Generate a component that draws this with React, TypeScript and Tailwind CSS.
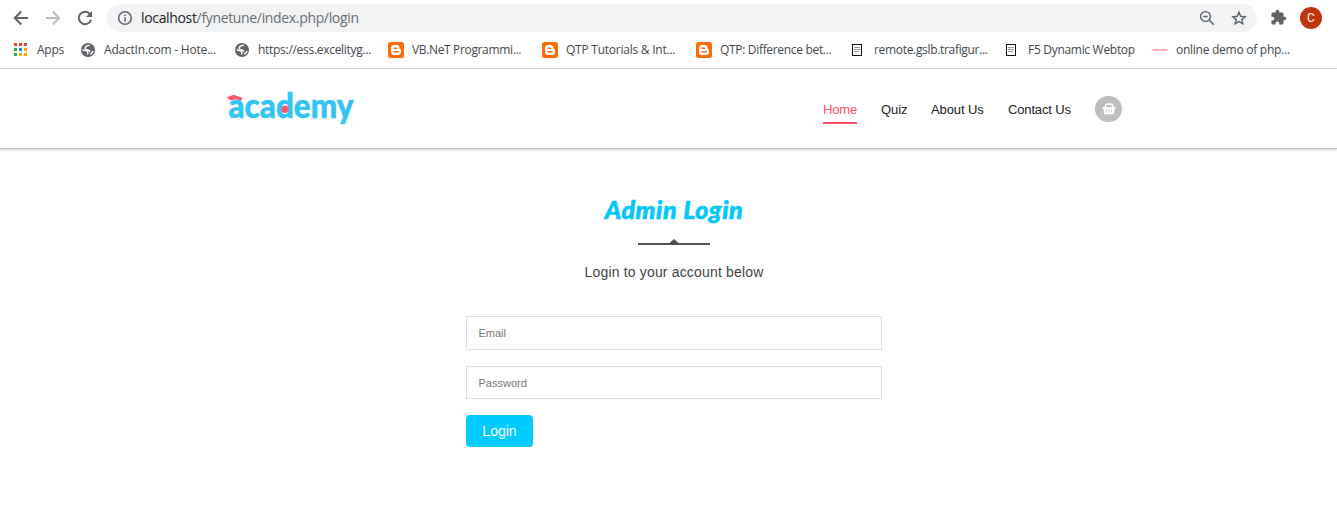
import type { ReactNode } from "react";

const Globe = () => (
  <svg width="16" height="16" viewBox="0 0 16 16">
    <circle cx="8" cy="8" r="7" fill="#5f6368" />
    <path d="M9.800 3.200C7 3.400 5.200 4.600 5.200 6.300c0 1.600 1.600 1.600 3 1.900 1.300.3 1.700.8 1.200 1.600M2.600 7.600c1 1.200 3 .8 4.600 1.600 1.200.7.700 2 .3 3.400M10.200 12.200c1.400-.6 2.400-1.700 2.800-3.200" fill="none" stroke="#fff" strokeWidth="1.500" />
  </svg>
);

const Blogger = () => (
  <svg width="16" height="16" viewBox="0 0 16 16">
    <rect width="16" height="16" rx="2.500" fill="#ff6a0b" />
    <path d="M6.200 3h2.600a2.600 2.600 0 0 1 2.600 2.600v.5c0 .5.3.8.8.8.5 0 .8.3.8.8v2A3.300 3.300 0 0 1 9.700 13H6.300A3.300 3.300 0 0 1 3 9.700V6.200A3.200 3.200 0 0 1 6.200 3z" fill="#fff" />
    <path d="M6 6.200h2.500M6 9.800h4" stroke="#ff6a0b" strokeWidth="1.500" strokeLinecap="round" />
  </svg>
);

const Doc = () => (
  <svg width="16" height="16" viewBox="0 0 16 16">
    <rect x="2.500" y="2.500" width="9" height="11" fill="#fff" stroke="#111" />
    <path d="M4 5.500h6M4 7.500h6M4 9.500h5" stroke="#999" />
  </svg>
);

const Dash = () => (
  <svg width="16" height="16" viewBox="0 0 16 16">
    <path d="M0.500 8h15" stroke="#f5aab3" strokeWidth="1.800" />
  </svg>
);

const appColors = ["#ea4335", "#ea4335", "#ea4335", "#34a853", "#1a84f5", "#fbab05", "#34a853", "#fbab05", "#fbab05"];

const AppsIcon = () => (
  <svg width="14" height="14" viewBox="0 0 14 14">
    {appColors.map((c, i) => (
      <rect key={i} x={(i % 3) * 5} y={Math.floor(i / 3) * 5} width="3" height="3" fill={c} />
    ))}
  </svg>
);

function Bookmark({ icon, label, className }: { icon: ReactNode; label: string; className: string }) {
  return (
    <div className="flex shrink-0 items-center gap-2">
      {icon}
      <span className={`whitespace-nowrap ${className}`}>{label}</span>
    </div>
  );
}

function BrowserBar() {
  return (
    <div className="h-[69px] border-b border-[#dcdde0] bg-white font-['Open_Sans','Noto_Sans',sans-serif]">
      <div className="flex h-[35px] items-center pl-[13px] pr-[15px]">
        <svg width="16" height="16" viewBox="0 0 16 16" fill="none" stroke="#5f6368" strokeWidth="2">
          <path d="M15 8H2.500M8.200 1.500L1.800 8l6.400 6.500" />
        </svg>
        <svg className="ml-4" width="16" height="16" viewBox="0 0 16 16" fill="none" stroke="#bbbdbf" strokeWidth="2">
          <path d="M1 8h12.500M7.800 1.500L14.200 8l-6.400 6.500" />
        </svg>
        <svg className="ml-4" width="16" height="16" viewBox="0 0 16 16">
          <path d="M13 4.200A6.200 6.200 0 1 0 14 9.700" fill="none" stroke="#5f6368" strokeWidth="2" />
          <path d="M15 1v6H9z" fill="#5f6368" />
        </svg>
        <div className="ml-[14px] flex h-7 w-[1150px] items-center rounded-full bg-[#f1f3f4] pl-[10px] pr-[10px]">
          <svg width="16" height="16" viewBox="0 0 16 16" fill="none" stroke="#5f6368" strokeWidth="1.500">
            <circle cx="8" cy="8" r="6.300" />
            <path d="M8 7.200v4.200M8 4.500v1.500" />
          </svg>
          <span className="ml-2 whitespace-nowrap text-[14px] leading-5 tracking-[-0.34px] text-[#6a6e73]">
            <span className="text-[#202124]">localhost</span>/fynetune/index.php/login
          </span>
          <svg className="ml-auto" width="16" height="16" viewBox="0 0 16 16" fill="none" stroke="#5f6368" strokeWidth="1.400">
            <circle cx="6.500" cy="6.500" r="4.900" />
            <path d="M10 10l4.800 4.800M4.300 6.500h4.400" strokeWidth="1.500" />
          </svg>
          <svg className="ml-4" width="16" height="16" viewBox="0 0 16 16" fill="none" stroke="#5f6368" strokeWidth="1.400">
            <path d="M8 2.200l1.700 4.100 4.400.4-3.300 2.900 1 4.300L8 11.600l-3.800 2.300 1-4.300-3.300-2.900 4.400-.4z" />
          </svg>
        </div>
        <svg className="ml-[13px]" width="17" height="17" viewBox="0 0 24 24" fill="#5f6368">
          <path d="M20.500 11H19V7a2 2 0 0 0-2-2h-4V3.500a2.500 2.500 0 0 0-5 0V5H4a2 2 0 0 0-2 2v3.800h1.500a2.700 2.700 0 0 1 0 5.400H2V20a2 2 0 0 0 2 2h3.800v-1.500a2.700 2.700 0 0 1 5.400 0V22H17a2 2 0 0 0 2-2v-4h1.500a2.500 2.500 0 0 0 0-5z" />
        </svg>
        <div className="ml-auto flex size-[22px] items-center justify-center rounded-full bg-[#bf360c] font-['Roboto',sans-serif] text-[12px] leading-[22px] text-white">C</div>
      </div>
      <div className="flex h-[29px] items-center pl-[14px] text-[12px] leading-4 text-[#44484c]">
        <div className="flex w-[66px] shrink-0 items-center gap-[9px]">
          <AppsIcon />
          <span className="tracking-[-0.25px]">Apps</span>
        </div>
        <div className="flex">
          <div className="w-[154px]"><Bookmark icon={<Globe />} label="AdactIn.com - Hote..." className="tracking-[-0.2px]" /></div>
          <div className="w-[154px]"><Bookmark icon={<Globe />} label="https://ess.excelityg..." className="tracking-[-0.29px]" /></div>
          <div className="w-[154px]"><Bookmark icon={<Blogger />} label="VB.NeT Programmi..." className="tracking-[-0.35px]" /></div>
          <div className="w-[154px]"><Bookmark icon={<Blogger />} label="QTP Tutorials & Int..." className="tracking-[-0.24px]" /></div>
          <div className="w-[154px]"><Bookmark icon={<Blogger />} label="QTP: Difference bet..." className="tracking-[-0.32px]" /></div>
          <div className="w-[154px]"><Bookmark icon={<Doc />} label="remote.gslb.trafigur..." className="tracking-[-0.32px]" /></div>
          <div className="w-[148px]"><Bookmark icon={<Doc />} label="F5 Dynamic Webtop" className="tracking-[-0.3px]" /></div>
          <Bookmark icon={<Dash />} label="online demo of php..." className="tracking-[-0.26px]" />
        </div>
      </div>
    </div>
  );
}

function Logo() {
  return (
    <svg width="130" height="44" viewBox="0 0 130 44" className="overflow-visible font-['Lato',sans-serif] font-black">
      <text x="2.500" y="30.500" fontSize="34" textLength="125" lengthAdjust="spacingAndGlyphs" fill="#32c5f4" stroke="#32c5f4" strokeWidth=".5" strokeLinejoin="round">academy</text>
      <path d="M0.500 10.500L7.500 7.800l9 3-1.500 3-5-1.500-5 1.300z" fill="#fa5b6c" />
      <circle cx="59" cy="22.300" r="3.700" fill="#fa5b6c" />
    </svg>
  );
}

function Header() {
  return (
    <header className="flex h-20 items-center border-b border-[#bdbdbd] bg-white pl-[226px] pr-[215px] shadow-[0_1px_3px_rgba(0,0,0,0.2)]">
      <Logo />
      <nav className="ml-auto flex items-center gap-6 text-[13px] leading-[26px] text-[#222]">
        <a className="mt-[2px] h-7 w-[34px] whitespace-nowrap border-b-2 border-[#ff5068] pt-px tracking-[-0.15px] text-[#ff5068]">Home</a>
        <a className="mt-[2px] w-[26px] whitespace-nowrap tracking-[-0.1px]">Quiz</a>
        <a className="mt-[2px] w-[53px] whitespace-nowrap tracking-[-0.1px]">About Us</a>
        <a className="mt-[2px] w-[63px] whitespace-nowrap tracking-[-0.15px]">Contact Us</a>
        <div className="flex h-[26px] w-[27px] items-center justify-center rounded-full bg-[#bebebe]">
          <svg width="14" height="14" viewBox="0 0 14 14">
            <path d="M3.500 5.500V4a2 2 0 0 1 2-2h3a2 2 0 0 1 2 2v1.500" fill="none" stroke="#fff" strokeWidth="1.500" />
            <path d="M.7 5h12.600v2.200h-.8l-.8 5H2.300l-.8-5H.7z" fill="#fff" />
            <path d="M4.500 8v2.500M7 8v2.500M9.500 8v2.500" stroke="#bebebe" strokeWidth=".8" />
          </svg>
        </div>
      </nav>
    </header>
  );
}

export default function App() {
  return (
    <div className="h-[521px] w-[1337px] overflow-hidden bg-white font-['Liberation_Sans',Arial,sans-serif]">
      <BrowserBar />
      <Header />
      <main className="flex flex-col items-center pl-[11px] pt-[44px]">
        <h1 className="whitespace-nowrap font-['Lato',sans-serif] text-[25px] font-black italic leading-8 tracking-[0.6px] text-[#00c8fa] [-webkit-text-stroke:0.6px_#00c8fa]">Admin Login</h1>
        <svg className="mt-[14px]" width="72" height="6" viewBox="0 0 72 6" fill="#505050">
          <path d="M0 4H31.500L36 0l4.500 4H72v2H0z" />
        </svg>
        <p className="mt-[17px] whitespace-nowrap text-[14px] leading-5 tracking-[0.17px] text-[#444]">Login to your account below</p>
        <form className="mt-[34px] flex w-[416px] flex-col items-start">
          <input className="h-[34px] w-full border border-[#dedede] px-[11.500px] text-[11px] outline-none placeholder:text-[#777]" placeholder="Email" />
          <input className="mt-4 h-[33px] w-full border border-[#dedede] px-[11.500px] text-[11px] outline-none placeholder:text-[#777]" placeholder="Password" />
          <button type="button" className="mt-4 h-8 w-[67px] rounded-[4px] bg-[#00ccff] text-[14px] leading-8 text-white">Login</button>
        </form>
      </main>
    </div>
  );
}
